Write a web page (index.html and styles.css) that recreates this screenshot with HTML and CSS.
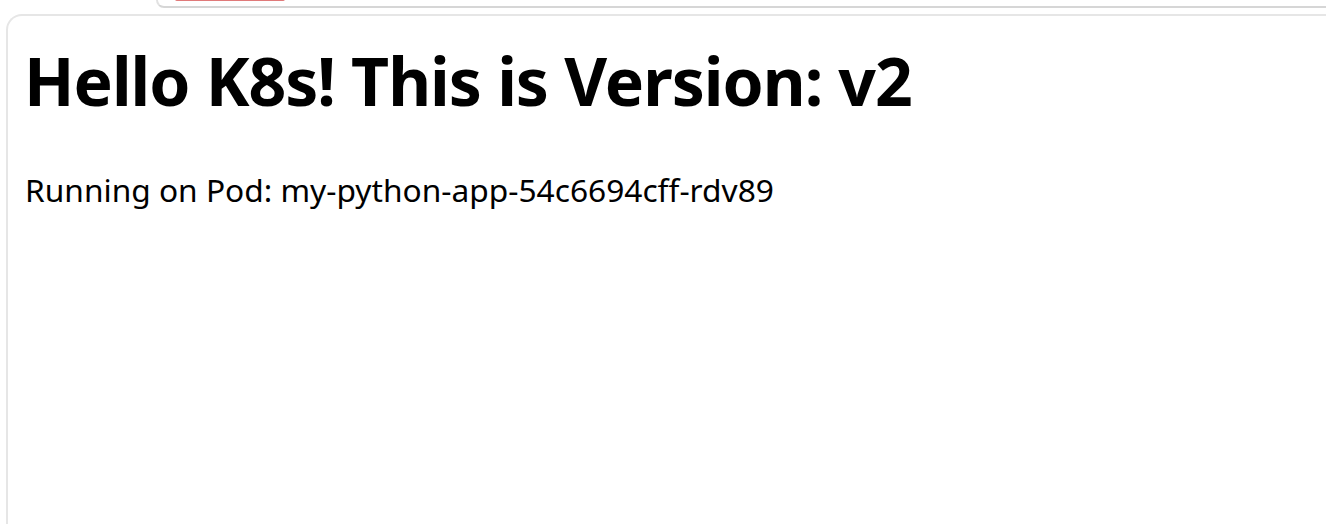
FILE: index.html
```html
<!DOCTYPE html>
<html lang="en">
<head>
<meta charset="utf-8">
<title>Hello K8s</title>
<link rel="stylesheet" href="styles.css">
</head>
<body>
<div class="chrome">
  <div class="tabstrip"><span class="tab-accent"></span></div>
</div>
<main class="card">
  <h1 class="title">Hello K8s! This is Version: v2</h1>
  <p class="pod">Running on Pod: my-python-app-54c6694cff-rdv89</p>
</main>
</body>
</html>
```

FILE: styles.css
```css
html, body {
  margin: 0;
  padding: 0;
  background: #ffffff;
  height: 100%;
  overflow: hidden;
}
body {
  font-family: "Noto Sans", "Open Sans", sans-serif;
  color: #000000;
  display: flex;
  flex-direction: column;
}
.chrome {
  height: 14px;
  flex: none;
  padding-left: 156px;
  display: flex;
}
.tabstrip {
  flex: 1;
  height: 6px;
  border-left: 2px solid #e2e2e2;
  border-bottom: 2px solid #d6d6d6;
  border-bottom-left-radius: 12px;
  position: relative;
}
.tab-accent {
  position: absolute;
  left: 17px;
  top: -1px;
  width: 110px;
  height: 2px;
  background: #e07a7a;
  border-radius: 0 0 2px 2px;
}
.card {
  flex: 1;
  margin-left: 6px;
  border: 2px solid #e6e6e6;
  border-right: none;
  border-bottom: none;
  border-top-left-radius: 16px;
  padding: 0 0 0 17px;
}
.title {
  margin: 16px 0 0 -1px;
  font-size: 66px;
  font-weight: 700;
  line-height: 96px;
  letter-spacing: -1px;
}
.pod {
  margin: 40px 0 0 0;
  font-size: 31.7px;
  font-weight: 400;
  line-height: 44px;
}
```
